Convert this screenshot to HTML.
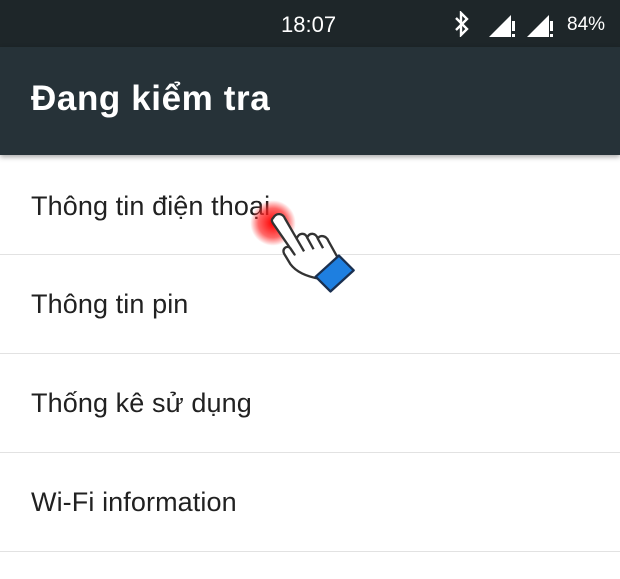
<!DOCTYPE html>
<html><head><meta charset="utf-8"><style>
body{margin:0;width:620px;height:579px;overflow:hidden;background:#fff;font-family:"Liberation Sans",sans-serif;position:relative}
.sb{position:absolute;left:0;top:0;width:620px;height:47px;background:#1e2629;color:#fff}
.tb{position:absolute;left:0;top:47px;width:620px;height:108px;background:#263238;box-shadow:0 2px 5px rgba(0,0,0,.35)}
.tb div{position:absolute;left:31px;top:32px;font-size:35px;color:#fff;font-weight:bold;letter-spacing:0.6px}
.it{position:absolute;left:31px;font-size:27px;color:#212121;letter-spacing:0.1px}
.ln{position:absolute;left:0;width:620px;height:1px;background:#e2e2e2}
</style></head><body>
<div class="sb">
<div style="position:absolute;left:281px;top:12px;font-size:22px">18:07</div>
<svg style="position:absolute;left:452px;top:11px" width="20" height="26" viewBox="0 0 20 26"><path d="M4 7 L15 18 L9 24 V2 L15 8 L4 19" fill="none" stroke="#fff" stroke-width="2.4"/></svg>
<svg style="position:absolute;left:488px;top:10px" width="30" height="28"><path d="M1 27 L23 5 V27Z" fill="#fff"/><rect x="24" y="11" width="3" height="10" fill="#fff"/><rect x="24" y="24" width="3" height="3" fill="#fff"/></svg>
<svg style="position:absolute;left:526px;top:10px" width="30" height="28"><path d="M1 27 L23 5 V27Z" fill="#fff"/><rect x="24" y="11" width="3" height="10" fill="#fff"/><rect x="24" y="24" width="3" height="3" fill="#fff"/></svg>
<div style="position:absolute;left:567px;top:14px;font-size:19px">84%</div>
</div>
<div class="tb"><div>Đang kiểm tra</div></div>
<div class="it" style="top:191px">Thông tin điện thoại</div>
<div class="ln" style="top:254px"></div>
<div class="it" style="top:289px">Thông tin pin</div>
<div class="ln" style="top:353px"></div>
<div class="it" style="top:388px">Thống kê sử dụng</div>
<div class="ln" style="top:452px"></div>
<div class="it" style="top:487px">Wi-Fi information</div>
<div class="ln" style="top:551px"></div>
<div style="position:absolute;left:250px;top:200px;width:46px;height:46px;border-radius:50%;background:radial-gradient(circle,#f00 0%,rgba(255,40,40,.7) 45%,rgba(255,80,80,0) 70%)"></div>
<svg style="position:absolute;left:265px;top:208px" width="95" height="92" viewBox="0 0 90 85">
<g stroke="#333" stroke-width="2.2" fill="#fff" stroke-linejoin="round">
<path d="M8 8 C11 3 17 4 19 9 L30 28 C32 22 38 22 40 27 C42 22 48 22 50 28 C52 24 58 25 60 30 L70 48 L52 66 C40 64 30 60 24 52 L18 42 C16 37 21 34 24 37 L28 43 L8 14 C6 11 6 10 8 8Z"/>
<path d="M30 28 L37 40 M40 27 L46 38 M50 28 L55 37" fill="none"/>
<path d="M48 64 L70 44 L84 58 L62 78Z" fill="#1e7fe0" stroke="#1a3050"/>
</g></svg>
</body></html>
